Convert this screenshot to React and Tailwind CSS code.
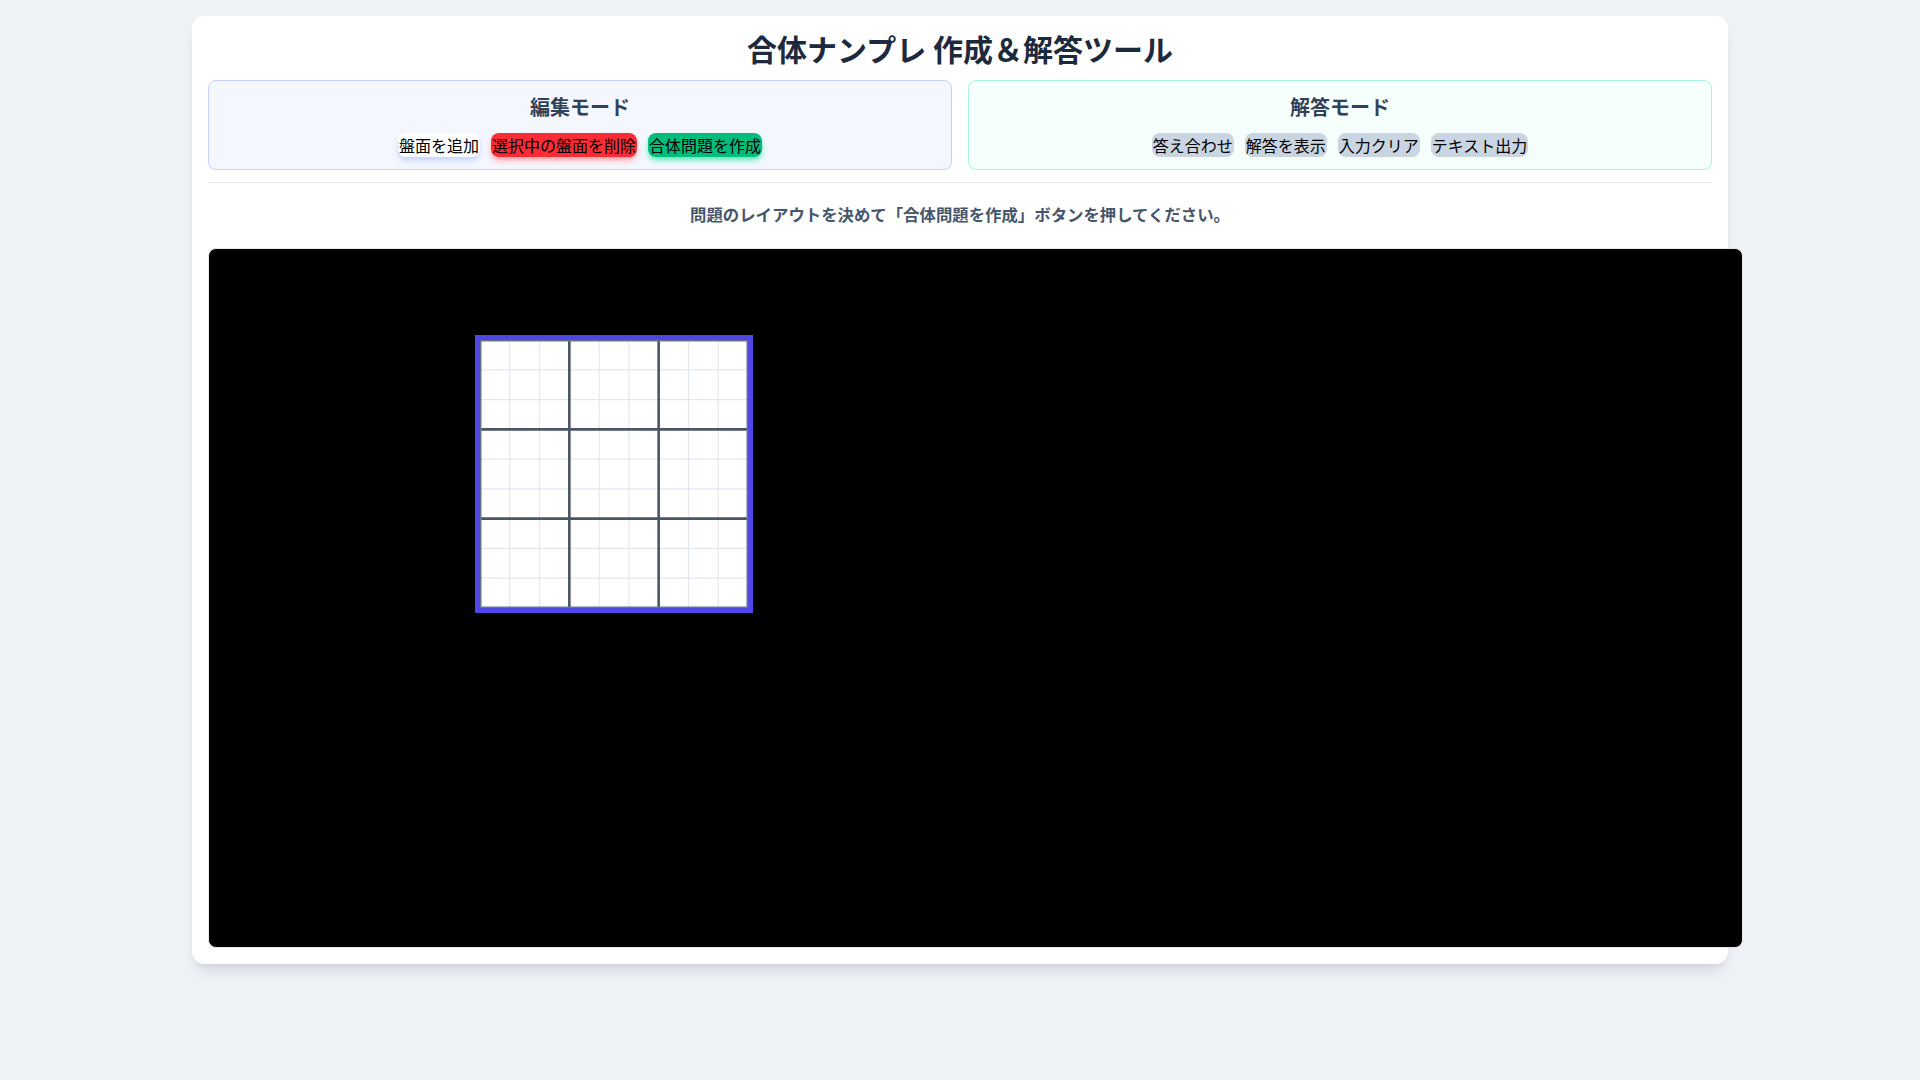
import React from "react";

function Board() {
  const size = 278;
  const b = 5;
  const inner = size - 2 * b;
  const cell = inner / 9;
  const thin = [];
  const thick = [];
  for (let i = 1; i < 9; i++) {
    const p = b + i * cell;
    if (i % 3 === 0) {
      thick.push(p);
    } else {
      thin.push(p);
    }
  }
  return (
    <svg width={size} height={size} viewBox={`0 0 ${size} ${size}`}>
      <rect x="0" y="0" width={size} height={size} fill="#4f46e5" />
      <rect x={b} y={b} width={inner} height={inner} fill="#ffffff" />
      {thin.map((p) => (
        <g key={"t" + p}>
          <line x1={p} y1={b} x2={p} y2={size - b} stroke="#e2e8f0" strokeWidth="1.2" />
          <line x1={b} y1={p} x2={size - b} y2={p} stroke="#e2e8f0" strokeWidth="1.2" />
        </g>
      ))}
      {thick.map((p) => (
        <g key={"k" + p}>
          <line x1={p} y1={b} x2={p} y2={size - b} stroke="#4b5563" strokeWidth="2.6" />
          <line x1={b} y1={p} x2={size - b} y2={p} stroke="#4b5563" strokeWidth="2.6" />
        </g>
      ))}
      <rect x={b + 0.75} y={b + 0.75} width={inner - 1.5} height={inner - 1.5} fill="none" stroke="#64748b" strokeWidth="1.5" />
    </svg>
  );
}

export default function App() {
  return (
    <div className="min-h-screen bg-[#eff2f7] pt-4 font-['Noto_Sans_CJK_JP','Noto_Sans',sans-serif]">
      <div className="mx-auto w-[1536px] rounded-xl bg-white p-4 shadow-lg">
        <h1 className="text-center text-3xl font-bold leading-8 pb-1 text-slate-800">
          合体ナンプレ 作成＆解答ツール
        </h1>
        <div className="mt-3 grid grid-cols-2 gap-4">
          <div className="rounded-lg border border-indigo-200 bg-[#f5f7ff] p-3 text-center">
            <h2 className="mb-3 text-xl font-bold leading-7 text-slate-700">編集モード</h2>
            <div className="flex justify-center gap-[11px]">
              <button className="rounded-lg bg-white px-px text-base leading-6 text-black shadow-md shadow-indigo-200">
                盤面を追加
              </button>
              <button className="rounded-lg bg-red-500 px-px text-base leading-6 text-black shadow-md shadow-red-300">
                選択中の盤面を削除
              </button>
              <button className="rounded-lg bg-emerald-500 px-px text-base leading-6 text-black shadow-md shadow-emerald-300">
                合体問題を作成
              </button>
            </div>
          </div>
          <div className="rounded-lg border border-[#a7f3dc] bg-[#f5fffb] p-3 text-center">
            <h2 className="mb-3 text-xl font-bold leading-7 text-slate-700">解答モード</h2>
            <div className="flex justify-center gap-[11px]">
              <button className="rounded-lg bg-slate-300 px-px text-base leading-6 text-black">答え合わせ</button>
              <button className="rounded-lg bg-slate-300 px-px text-base leading-6 text-black">解答を表示</button>
              <button className="rounded-lg bg-slate-300 px-px text-base leading-6 text-black">入力クリア</button>
              <button className="rounded-lg bg-slate-300 px-px text-base leading-6 text-black">テキスト出力</button>
            </div>
          </div>
        </div>
        <hr className="my-3 border-gray-200" />
        <p className="mb-[22px] mt-[19px] text-center text-[16.4px] font-semibold leading-6 text-slate-600">
          問題のレイアウトを決めて「合体問題を作成」ボタンを押してください。
        </p>
        <div className="relative h-[700px] w-[1535px] overflow-hidden rounded-lg border border-gray-200 bg-black">
          <div className="absolute left-[266px] top-[86px]">
            <Board />
          </div>
        </div>
      </div>
    </div>
  );
}
